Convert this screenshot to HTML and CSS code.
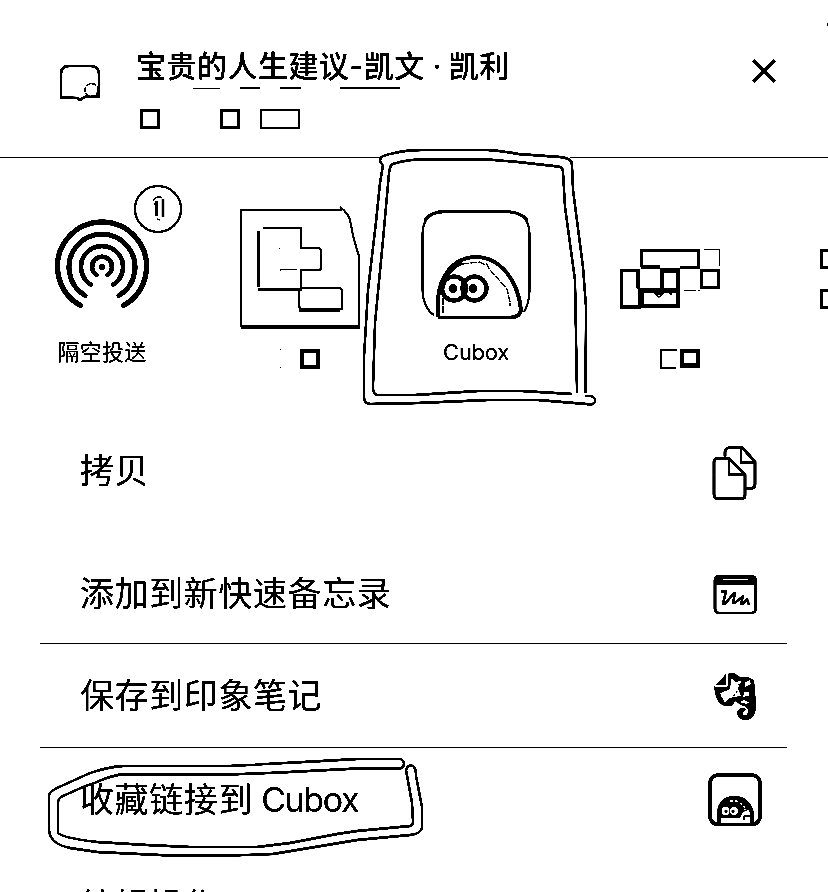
FILE: index.html
```html
<!DOCTYPE html>
<html lang="zh-CN">
<head>
<meta charset="utf-8">
<title>宝贵的人生建议</title>
<link rel="stylesheet" href="styles.css">
</head>
<body>
<main class="sheet">
  <header class="header">
    <svg class="header-icon" viewBox="58 60 44 44"><path d="M61 97V74Q61 66 69 66H91Q99 66 99 75V97" stroke-width="2.4"/><path d="M60 97.5L77 98L80 100L83 98L87 96M87 97H100" stroke-width="2.4"/><circle cx="91.5" cy="90" r="6.5" stroke-width="1.3" stroke-dasharray="5 1"/><path class="solid" d="M99 91V98H90Q98 97 99 91Z"/></svg>
    <div class="heading">
      <h1>宝贵的人生建议-凯文<span class="dot"> · </span>凯利</h1>
      <svg class="heading-pixels" viewBox="137 84 280 50"><path d="M193 88.5H220" stroke-width="1"/><path d="M240 88H260M280 88H301M340 88H400" stroke-width="2"/><path d="M141.5 110.5H158.5V127.5H141.5ZM221.5 110.5H238.5V127.5H221.5Z" stroke-width="3"/><path d="M261 110H299V128H261Z" stroke-width="2"/></svg>
    </div>
    <svg class="close" viewBox="750 57 28 28"><path d="M753.5 60.5L774.5 81.5M774.5 60.5L753.5 81.5" stroke-width="3.8"/></svg>
  </header>
  <section class="apps">
    <div class="app">
      <svg width="204" height="150" viewBox="0 180 204 150">
        <circle class="solid" cx="102" cy="267" r="3"/>
        <path stroke-width="4.4" stroke-linecap="round" d="M96.5 275A10 10 0 1 1 107.5 275"/>
        <path stroke-width="4.4" stroke-linecap="round" d="M90.5 284.5A21 21 0 1 1 113.5 284.5"/>
        <path stroke-width="4.8" stroke-linecap="round" d="M85 295.5A33 33 0 1 1 119 295.5"/>
        <path stroke-width="5" stroke-linecap="round" d="M80.5 305.5A44.5 44.5 0 1 1 123.5 305.5"/>
        <circle cx="158" cy="209" r="23" stroke-width="2"/>
        <path stroke-width="1.2" d="M153 201Q157 195 162 198"/><path stroke-width="2.6" d="M156.5 201V216M163 199V217"/><path stroke-width="1.2" d="M154 204H157M157 219L160 220"/>
      </svg>
      <span class="label airdrop">隔空投送</span>
    </div>
    <div class="app">
      <svg width="192" height="150" viewBox="204 180 192 150"><path stroke-width="2" d="M241 327V210H342"/><path stroke-width="3" d="M241 327H360"/><path stroke-width="1.8" d="M340 207Q350 214 351 225Q353 238 359 256V326M258.5 231V287"/><path stroke-width="1" d="M280.5 271V269.5H297M279 248.5H280"/><path stroke-width="1.8" d="M263 227.8H301V248H318Q321 248 321 251V268Q321 270 318 270H301V289.5H258"/><path stroke-width="2" d="M301 288H339Q342 288 342 292V309H302Q299 309 299 304V291M299 310.5H340"/></svg>
      <svg class="pixel-label" width="192" height="45" viewBox="204 330 192 45"><path stroke-width="4" d="M302 351H318V367H302Z"/><path stroke-width="1" d="M280 349.5H281M280 367.5H281"/></svg>
    </div>
    <div class="app">
      <svg width="160" height="150" viewBox="396 180 160 150">
        <path stroke-width="1.9" d="M434 315Q422 307 422.5 286V234Q423 212 443 212H509Q529 212 529.5 234V291Q529 304 524 312"/>
        <path stroke-width="2.8" d="M425 220Q431 211.5 446 211.5H506Q521 212 527 220"/>
        <path stroke-width="3.7" d="M438 317V298C440 278 452 257 476 257C500 257 518 280 521 310Q520 317 511 317.5H438"/>
        <path stroke-width="5" d="M441 292Q445 269 462 262"/>
        <circle cx="454" cy="288.5" r="12" stroke-width="4"/><circle cx="474.5" cy="288.5" r="12" stroke-width="4"/>
        <circle class="solid" cx="453" cy="288.5" r="4.3"/><circle class="solid" cx="473" cy="288.5" r="4.3"/>
        <path stroke-width="1.1" stroke-dasharray="7 1" d="M455 267L462 264L480 262L485 265M486 263L490 270L500 281L507 289L510 302V306M443 298V313"/>
      </svg>
      <span class="label latin">Cubox</span>
    </div>
    <div class="app">
      <svg width="228" height="150" viewBox="556 180 228 150"><path stroke-width="3" d="M641.5 267V250.5H698.5V267.5H680M660 267H641M621.5 270.5H638V287L640 290V307H621.5ZM701.5 270.5H718.5V287.5H701.5Z"/><path stroke-width="4" d="M662 289V271H678V290M642 290.5H678V306H642Z"/><path stroke-width="1.2" d="M704 249.5H719.5V266M660 268.5H680M684 290.5H696M698 290.5H700M654 293L659 297L664 293M656 294H662M665 292L670 293M671 291V295"/></svg>
      <svg class="pixel-label" width="228" height="45" viewBox="556 330 228 45"><path stroke-width="2" d="M677 350H661V368H676"/><path stroke-width="4" d="M682 351H698V365.5H682Z"/></svg>
    </div>
    <div class="app">
      <svg width="44" height="150" viewBox="784 180 44 150"><path stroke-width="3" d="M828 250.5H821.5V267.5H828M828 290.5H821.5V307.5H828"/></svg>
    </div>
  </section>
  <section class="actions">
    <div class="action copy"><span>拷贝</span>
      <svg width="60" height="60" viewBox="705 440.5 60 60"><g stroke-width="2.7" stroke-linejoin="round"><path d="M718 458H729L745 474V495Q745 498 742 498H718Q714 498 714 494V461Q714 458 718 458Z"/><path d="M725 456V451Q726 447 731 447H742L755 461V484Q755 488 750 488H746"/></g><path stroke-width="2" d="M729 458V474H745M741 447V462H755"/></svg></div>
    <div class="action memo"><span>添加到新快速备忘录</span>
      <svg width="60" height="60" viewBox="705 560 60 60"><rect x="715" y="575" width="40.5" height="37" rx="4" stroke-width="2.7"/><path stroke-width="8" d="M715 579.5H756"/><path class="white" stroke-width="1.4" d="M723 578.5H748"/><path stroke-width="2.3" stroke-linejoin="round" d="M721 591L726 590L723 603H725L734 592H735L733 602H735L743 595L741 603H743L747 598L749 604"/></svg></div>
    <div class="action ruled"><span>保存到印象笔记</span>
      <svg width="60" height="60" viewBox="705 666 60 60"><path class="solid" d="M714 687L726 674L734 673L740 677H748L754 680L756 704Q756 720 745 720Q737 719 737 712Q740 706 746 709L742 714Q746 717 748 713Q749 706 741 705L735 701L732 706Q720 708 716 697Z"/><path class="paper" d="M720 693L730 689L731 678L736 682L742 680L738 688L741 696L730 698L725 703L721 696ZM745 682L750 680L751 684L745 687ZM744 692H749V696L743 697ZM739 702L746 704L750 703L744 700Z"/><path class="white" stroke-width="1.6" d="M715 686H727V674"/><path stroke-width="1.4" stroke-dasharray="2 2" d="M737 691L732 699M739 684L742 690"/></svg></div>
    <div class="action ruled"><span>收藏链接到<b> Cubox</b></span>
      <svg width="60" height="60" viewBox="705 770 60 60"><rect x="710" y="775" width="50" height="49.5" rx="8" stroke-width="3.7"/><path stroke-width="4" d="M719 824V812Q721 798 734 798Q748 798 752 813V824"/><circle class="solid" cx="727" cy="810" r="8"/><circle class="solid" cx="735" cy="810" r="8"/><path class="solid" d="M722 803Q732 794 744 802L749 810L744 809L740 818H720Z"/><circle class="paper" cx="725.5" cy="811" r="4.2"/><circle class="paper" cx="734" cy="811" r="4.2"/><circle class="solid" cx="726" cy="811" r="1.5"/><circle class="solid" cx="733" cy="811" r="1.5"/><path class="white" stroke-width="1.5" stroke-dasharray="3 2" d="M730 801H737L743 805L747 812"/><path stroke-width="1" d="M744 820V816H750M741 812L747 810"/></svg></div>
    <div class="action edit"><span>编辑操作</span></div>
  </section>
  <svg class="marks" viewBox="0 0 828 892" aria-hidden="true">
    <path class="mask" d="M381 157.5H570"/>
    <path d="M383 165Q377 160 383 156L390 154Q405 150 422 150H488Q503 151 518 154L560 157Q572 158 572 165L573 190L583 267L586 307L585.5 393M585.5 396H591Q596 398 595 402Q592 406 586 404L538 400H488L418 403L370 404Q364 403 364 397V357L368 290L376 222L380 183L383 165"/>
    <path d="M389 173Q390 163 396 163Q408 159.5 422 159.5H488L518 162L558 166.5Q563 167 563 172L565 207L575 280L577 393M572 394L522 391H478L415 395H377Q373 394 373 387L375 323L383 240L389 173"/>
    <path d="M49 796Q49 792 57 788L90 773Q108 767 123 766H230L313 761.5L357 759H400Q404 760 404 764Q403 768.5 400 768.5H357L280 772.5L230 774.5H120Q107 777 97 782L83 787L63 796Q58 798 58 803V833Q63 838 97 842L147 845L190 847H257L290 843L337 834L357 831L410 826Q413 825 413 822L412 803L406 770Q408 764 413 766Q416 768 416 776L422 807V828Q420 834 410 835L357 840L273 854L230 855.5H170L97 852L70 848Q50 844 49 830Z"/>
    <path d="M827 24.5H828" stroke-width="2"/>
  </svg>
</main>
</body>
</html>
```

FILE: styles.css
```css
* { box-sizing: border-box; }
body { margin: 0; background: #fff; color: #000; font-family: Inter, "Noto Sans CJK SC", sans-serif; }
.sheet { position: relative; width: 828px; height: 892px; overflow: hidden; background: #fff; filter: grayscale(1) brightness(.75) contrast(12); }
svg { display: block; flex: none; fill: none; stroke: #000; }
svg .solid { fill: #000; stroke: none; }
svg .paper { fill: #fff; stroke: none; }
svg .white { stroke: #fff; }
.header { display: flex; height: 158px; padding: 0 50px 0 58px; border-bottom: 1px solid #000; }
.header-icon { width: 44px; height: 44px; margin-top: 60px; }
.heading { flex: 1; padding: 48px 0 0 35px; }
h1 { height: 36px; margin: 0 0 0 -1px; font: 500 30px/36px Inter, "Noto Sans CJK SC", sans-serif; letter-spacing: .5px; white-space: nowrap; }
.dot { letter-spacing: -.4px; }
.heading-pixels { width: 280px; height: 50px; }
.close { width: 28px; height: 28px; margin-top: 57px; }
.apps { display: grid; grid-template-columns: 204px 192px 160px 228px 44px; height: 262px; padding-top: 22px; }
.app { display: flex; flex-direction: column; align-items: center; }
.label { height: 45px; font-size: 22px; line-height: 45px; letter-spacing: .2px; }
.latin { letter-spacing: -.3px; }
.actions { padding: 0 41px 0 40px; }
.action { display: flex; align-items: center; justify-content: space-between; height: 104px; padding: 0 22px 0 40px; border-bottom: 1px solid transparent; font-size: 34px; letter-spacing: .6px; white-space: nowrap; }
.action span { padding-bottom: 5px; }
.copy { height: 103px; margin-bottom: 16px; }
.memo span { padding: 2px 0 0; }
.action.edit span { padding: 2px 0 0; }
.ruled { border-top: 1px solid #000; border-bottom: 0; }
.action b { font-weight: 400; letter-spacing: -1.4px; }
.marks { position: absolute; inset: 0; width: 828px; height: 892px; stroke-width: 2.3; pointer-events: none; }
.marks .mask { stroke: #fff; }
```
